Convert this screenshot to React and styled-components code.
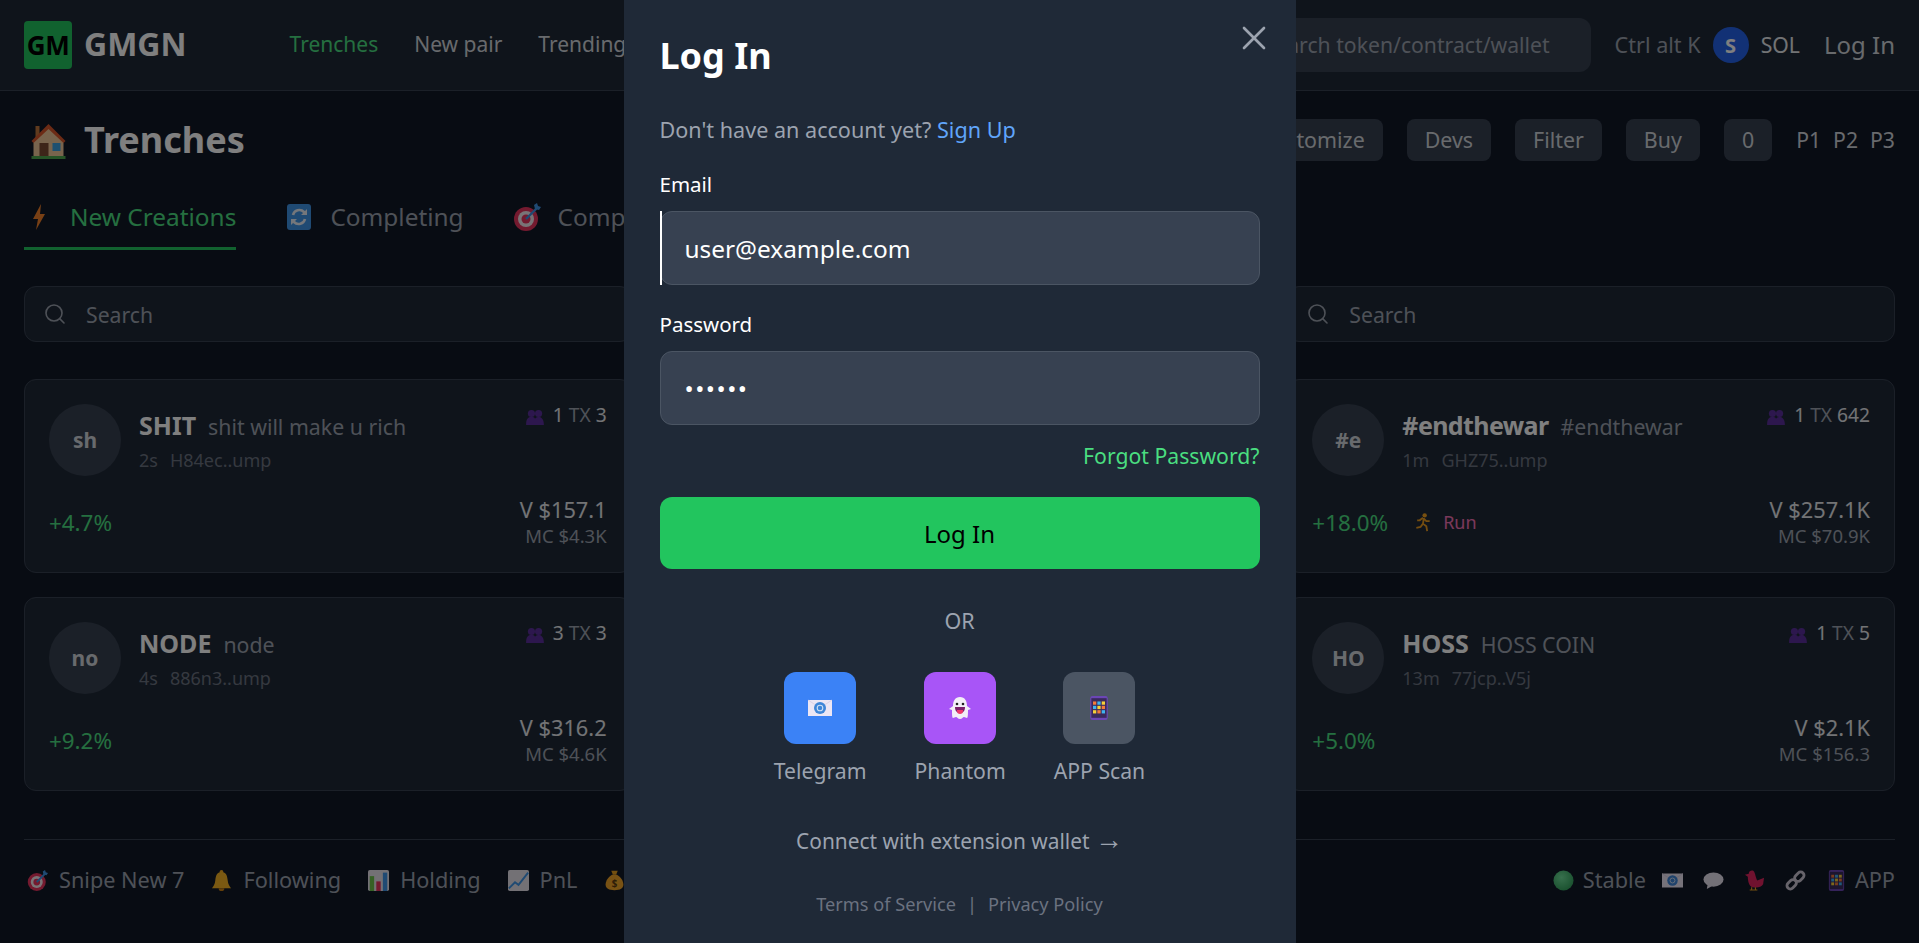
import React from 'react';
import styled, {createGlobalStyle} from 'styled-components';
import {X, Search as SearchIcon} from 'lucide-react';

const Global = createGlobalStyle`
  html, body { margin:0; padding:0; height:100%; background:#111827; }
  body { font-family:"Noto Sans","Open Sans",sans-serif; color:#e5e7eb; overflow:hidden; }
  * { box-sizing:border-box; }
`

/* ---------- emoji drawings ---------- */
const House = () => (
  <svg viewBox="0 0 36 36" width="100%" height="100%">
    <rect x="5" y="3" width="4" height="12" fill="#c0763c"/>
    <path d="M18 3 33 18v16H3V18z" fill="#f0c99a"/>
    <path d="M18 1 35 18l-2 2L18 6 3 20l-2-2z" fill="#d9562b"/>
    <rect x="9" y="20" width="9" height="13" fill="#7a4a33"/>
    <rect x="22" y="20" width="8" height="8" fill="#3aa0e0"/>
    <rect x="1" y="33" width="34" height="3" fill="#4fa84f"/>
  </svg>
)
const Bolt = () => (
  <svg viewBox="0 0 30 30" width="100%" height="100%">
    <path d="M17 2 9 17h5l-2 11 9-16h-5z" fill="#f0812a"/>
  </svg>
)
const Refresh = () => (
  <svg viewBox="0 0 30 30" width="100%" height="100%">
    <rect x="3" y="2" width="24" height="26" rx="3" fill="#3f95e6"/>
    <path d="M9 13a6.500 6.500 0 0 1 11-3l2 2M21 17a6.500 6.500 0 0 1-11 3l-2-2" fill="none" stroke="#e8eef7" strokeWidth="2.600"/>
    <path d="M23 7v6h-6zM7 23v-6h6z" fill="#e8eef7"/>
  </svg>
)
const Target = ({tight}) => (
  <svg viewBox={tight ? '1 1 28 28' : '0 0 30 30'} width="100%" height="100%">
    <circle cx="14" cy="17" r="12" fill="#e8345f"/>
    <circle cx="14" cy="17" r="8" fill="#f3e9ee"/>
    <circle cx="14" cy="17" r="4.500" fill="#e8345f"/>
    <path d="M14 17 25 6" stroke="#3f95e6" strokeWidth="2.400"/>
    <path d="M22 3l1 4 4 1 2-3-3-1-1-3z" fill="#3f95e6"/>
  </svg>
)
const People = () => (
  <svg viewBox="0 0 20 18" width="100%" height="100%">
    <circle cx="6" cy="5" r="4" fill="#5b2f9c"/>
    <circle cx="14" cy="5" r="4" fill="#5b2f9c"/>
    <path d="M0 18c0-7 2-9 6-9s4 2 4 2 1-2 4-2 6 2 6 9z" fill="#5b2f9c"/>
  </svg>
)
const Runner = () => (
  <svg viewBox="0 0 24 24" width="100%" height="100%">
    <circle cx="14" cy="4" r="2.600" fill="#f0a020"/>
    <path d="M12 7l-4 3-3 0M13 7l-1 7 4 3 1 6M12 14l-3 4-5 1M13 8l3 3 4 0" fill="none" stroke="#e89a20" strokeWidth="2.200"/>
  </svg>
)
const Bell = () => (
  <svg viewBox="2 0 20 22" width="100%" height="100%">
    <circle cx="12" cy="2" r="2" fill="#f0a820"/>
    <path d="M12 2c5 0 6 4 6.500 9 .3 4 2 6 3.500 8H2c1.500-2 3.200-4 3.500-8C6 6 7 2 12 2z" fill="#f5b324"/>
    <path d="M9 19h6a3 3 0 0 1-6 0z" fill="#c77f14"/>
  </svg>
)
const Bars = () => (
  <svg viewBox="0 0 24 24" width="100%" height="100%">
    <rect width="24" height="24" rx="2" fill="#e6e3ea"/>
    <rect x="2" y="7" width="5" height="17" fill="#6cc24a"/>
    <rect x="9.500" y="13" width="5" height="11" fill="#e8345f"/>
    <rect x="17" y="3" width="5" height="21" fill="#3f95e6"/>
  </svg>
)
const ChartUp = () => (
  <svg viewBox="0 0 24 24" width="100%" height="100%">
    <rect width="24" height="24" rx="2" fill="#e6e3ea"/>
    <path d="M1 21l7-7 4 3L23 3" fill="none" stroke="#3f95e6" strokeWidth="2.200"/>
  </svg>
)
const Money = () => (
  <svg viewBox="0 0 24 26" width="100%" height="100%">
    <path d="M8 1h8l-2 5h-4z" fill="#e8a020"/>
    <path d="M9 6h6c5 3 8 8 8 12 0 5-4 7-11 7S1 23 1 18c0-4 3-9 8-12z" fill="#f0a528"/>
    <text x="12" y="21" fontSize="12" fontWeight="700" textAnchor="middle" fill="#5a3a10">$</text>
  </svg>
)
const Ball = () => (
  <svg viewBox="0 0 22 22" width="100%" height="100%">
    <defs>
      <radialGradient id="ballFill" cx=".4" cy=".35" r=".75">
        <stop offset="0" stopColor="#6fe09a"/>
        <stop offset="1" stopColor="#2f9c58"/>
      </radialGradient>
    </defs>
    <circle cx="11" cy="11" r="10.500" fill="url(#ballFill)"/>
  </svg>
)
const Mail = () => (
  <svg viewBox="0 0 24 18" width="100%" height="100%">
    <rect y="1" width="24" height="16" fill="#ece6f4"/>
    <path d="M0 1l12 8 12-8" fill="none" stroke="#d5cbe2" strokeWidth=".8"/>
    <circle cx="12" cy="9" r="6" fill="#3f86d8"/>
    <circle cx="12" cy="9" r="2.800" fill="none" stroke="#cfe0f5" strokeWidth="1.100"/>
  </svg>
)
const Speech = () => (
  <svg viewBox="0 0 22 18" width="100%" height="100%">
    <ellipse cx="11" cy="8" rx="10.500" ry="7.500" fill="#e7e2ee"/>
    <path d="M5 12l-1 6 7-4z" fill="#e7e2ee"/>
  </svg>
)
const Bird = () => (
  <svg viewBox="0 0 22 22" width="100%" height="100%">
    <path d="M1 5l4-1C5 1 8 0 10 1c2 2 2 7 4 10l7-3-1 7c-2 3-6 4-11 3C5 17 4 11 4 7z" fill="#e0245e"/>
    <path d="M8 18v3M12 18v3M6 21h8" stroke="#e8a020" strokeWidth="1.200"/>
  </svg>
)
const ChainLink = () => (
  <svg viewBox="0 0 22 22" width="100%" height="100%" fill="none" stroke="#cfc9d6" strokeWidth="3">
    <rect x="-5.500" y="-3.500" width="11" height="7" rx="3.500" transform="translate(7 15) rotate(-45)"/>
    <rect x="-5.500" y="-3.500" width="11" height="7" rx="3.500" transform="translate(15 7) rotate(-45)"/>
  </svg>
)
const Phone = () => (
  <svg viewBox="0 0 16 22" width="100%" height="100%">
    <rect width="16" height="22" rx="2" fill="#6b46b5"/>
    <rect x="1" y="2" width="14" height="18" fill="#3a2a5c"/>
    {[3,7,11].flatMap(y => [2.500,6.500,10.500].map((x,i) => (
      <rect key={x+'-'+y} x={x} y={y+2} width="3" height="3" fill={['#f47b3a','#3fb4ef','#f7d038'][(i+y)%3]}/>
    )))}
  </svg>
)
const Ghost = () => (
  <svg viewBox="0 0 24 24" width="100%" height="100%">
    <path d="M12 1c5 0 7 4 7 9l4 3-3 1c0 3 0 8-1 8s-2-1-3-1-2 2-4 2-3-2-4-2-2 1-3 1-1-5-1-8l-3-1 4-3c0-5 2-9 7-9z" fill="#f2eef7"/>
    <circle cx="9" cy="8" r="1.300" fill="#222"/>
    <circle cx="15" cy="8" r="1.300" fill="#222"/>
    <path d="M7 11h10c0 4-2 6-5 6s-5-2-5-6z" fill="#7a1f6b"/>
    <path d="M9 14h6c0 3-1 4-3 4s-3-1-3-4z" fill="#f0386b"/>
  </svg>
)

/* ---------- page ---------- */
const Page = styled.div`
  height:943px;
  overflow:hidden;
  display:flex;
  flex-direction:column;
`
const Header = styled.header`
  height:91px;
  flex:none;
  background:#1f2937;
  border-bottom:1px solid #374151;
  padding:0 24px;
  display:flex;
  align-items:center;
  justify-content:space-between;
`
const Row = styled.div`
  display:flex;
  align-items:center;
  gap:${p => p.$gap || 0}px;
`
const LogoBox = styled.div`
  width:48px;
  height:48px;
  border-radius:4px;
  background:#22c55e;
  color:#000;
  font-weight:700;
  font-size:26px;
  letter-spacing:-.5px;
  display:flex;
  align-items:center;
  justify-content:center;
`
const LogoText = styled.div`
  font-size:32px;
  font-weight:700;
  color:#fff;
  margin-left:12px;
  margin-right:103px;
  padding-bottom:3px;
`
const NavLink = styled.a`
  font-size:21px;
  padding-bottom:2px;
  color:${p => p.$active ? '#4ade80' : '#d1d5db'};
`
const TopSearch = styled.div`
  width:347px;
  height:54px;
  border-radius:12px;
  background:#374151;
  color:#9ca3af;
  font-size:21.2px;
  display:flex;
  align-items:center;
  padding:0 0 2px 20px;
  white-space:nowrap;
  overflow:hidden;
`
const Shortcut = styled.span`
  margin-left:12px;
  padding-bottom:2px;
  font-size:21.6px;
  color:#9ca3af;
`
const SolBadge = styled.div`
  width:36px;
  height:36px;
  border-radius:50%;
  background:#2563eb;
  color:#fff;
  font-weight:700;
  font-size:20px;
  display:flex;
  align-items:center;
  justify-content:center;
`
const Sol = styled.span`
  font-size:21.2px;
  padding-bottom:2px;
  color:#e5e7eb;
`
const HeaderLogin = styled.span`
  margin-left:12px;
  padding-bottom:2px;
  font-size:24px;
  color:#d1d5db;
`
const Main = styled.main`
  flex:1;
  padding:0 24px;
  display:flex;
  flex-direction:column;
`
const TitleRow = styled.div`
  height:48px;
  margin-top:25px;
  display:flex;
  align-items:center;
  justify-content:space-between;
`
const Title = styled.h1`
  margin:0;
  display:flex;
  align-items:center;
  gap:17px;
  font-size:36px;
  line-height:48px;
  font-weight:700;
  color:#fff;
`
const TitleEmoji = styled.span`
  width:37px;
  height:36px;
  margin-left:6px;
`
const ToolButton = styled.button`
  height:42px;
  padding:0 18px 2px;
  border:none;
  border-radius:8px;
  background:#374151;
  color:#d1d5db;
  font:inherit;
  font-size:21.4px;
`
const Preset = styled.span`
  font-size:21.2px;
  padding-bottom:2px;
  color:#d1d5db;
`
const Tabs = styled.div`
  display:flex;
  gap:48px;
  margin-top:37px;
`
const Tab = styled.div`
  display:flex;
  align-items:center;
  gap:16px;
  height:49px;
  padding-bottom:15px;
  font-size:24.4px;
  color:${p => p.$active ? '#4ade80' : '#9ca3af'};
  border-bottom:3px solid ${p => p.$active ? '#22c55e' : 'transparent'};
`
const TabEmoji = styled.span`
  width:30px;
  height:30px;
  flex:none;
`
const Columns = styled.div`
  display:grid;
  grid-template-columns:repeat(3,1fr);
  gap:24px;
  margin-top:36px;
`
const Column = styled.section`
  display:flex;
  flex-direction:column;
  gap:24px;
`
const SearchBox = styled.div`
  height:56px;
  margin-bottom:13px;
  border:1px solid #374151;
  border-radius:12px;
  background:#1f2937;
  padding:0 18px;
  display:flex;
  align-items:center;
  gap:19px;
  font-size:21.2px;
  color:#9ca3af;
`
const Card = styled.article`
  height:194px;
  padding:24px;
  border:1px solid #374151;
  border-radius:12px;
  background:#1f2937;
  display:flex;
  flex-direction:column;
  justify-content:space-between;
`
const CardTop = styled.div`
  display:flex;
  align-items:flex-start;
  justify-content:space-between;
`
const CardId = styled.div`
  display:flex;
  align-items:center;
  gap:18px;
`
const Avatar = styled.div`
  width:72px;
  height:72px;
  border-radius:50%;
  background:#374151;
  color:#d1d5db;
  font-size:21px;
  font-weight:700;
  display:flex;
  align-items:center;
  justify-content:center;
`
const NameRow = styled.div`
  display:flex;
  align-items:baseline;
  gap:12px;
  line-height:32px;
`
const Name = styled.span`
  font-size:25px;
  font-weight:700;
  letter-spacing:${p => p.$tight ? '-.6px' : 'normal'};
  color:#fff;
`
const Sub = styled.span`
  font-size:21.3px;
  color:#9ca3af;
`
const Meta = styled.div`
  margin-top:5px;
  display:flex;
  gap:12px;
  font-size:18px;
  line-height:24px;
  color:#6b7280;
`
const Tx = styled.div`
  display:flex;
  align-items:center;
  gap:9px;
  font-size:19.2px;
  line-height:22px;
  color:#9ca3af;
`
const TxNum = styled.span`
  color:#e5e7eb;
`
const TxIcon = styled.span`
  width:18px;
  height:16px;
`
const CardBottom = styled.div`
  display:flex;
  align-items:center;
  justify-content:space-between;
`
const BottomLeft = styled.div`
  display:flex;
  align-items:center;
  gap:25px;
`
const Pct = styled.span`
  font-size:22.4px;
  color:#4ade80;
`
const RunTag = styled.span`
  display:flex;
  align-items:center;
  gap:10px;
  font-size:18px;
  color:#f472b6;
`
const RunIcon = styled.span`
  width:20px;
  height:22px;
`
const Amounts = styled.div`
  text-align:right;
`
const Volume = styled.div`
  font-size:21.8px;
  line-height:28px;
  color:#e5e7eb;
`
const Cap = styled.div`
  font-size:18.5px;
  line-height:24px;
  color:#9ca3af;
`
const Footer = styled.footer`
  margin-top:48px;
  border-top:1px solid #374151;
  padding-top:26px;
  display:flex;
  align-items:center;
  justify-content:space-between;
  font-size:21.7px;
  color:#9ca3af;
`
const FooterItem = styled.span`
  display:flex;
  align-items:center;
  gap:8px;
  line-height:28px;
`
const FooterEmoji = styled.span`
  width:21px;
  height:21px;
  margin:0 ${p => p.$m === undefined ? 3 : p.$m}px;
  display:flex;
  align-items:center;
`

/* ---------- modal ---------- */
const Overlay = styled.div`
  position:fixed;
  inset:0;
  background:rgba(0,0,0,.5);
  display:flex;
  justify-content:center;
  overflow:hidden;
`
const Modal = styled.div`
  position:relative;
  width:672px;
  height:943px;
  background:#1f2937;
  padding:36px;
  color:#fff;
`
const Close = styled.button`
  position:absolute;
  top:18px;
  right:22px;
  width:40px;
  height:40px;
  padding:0;
  border:none;
  background:none;
  color:#9ca3af;
`
const ModalTitle = styled.h2`
  margin:0;
  font-size:36px;
  line-height:40px;
  font-weight:700;
`
const Prompt = styled.p`
  margin:40px 0 0;
  font-size:21.6px;
  line-height:28px;
  color:#9ca3af;
`
const SignUp = styled.a`
  color:#60a5fa;
`
const Label = styled.label`
  display:block;
  margin-top:${p => p.$top}px;
  margin-bottom:13px;
  font-size:20.5px;
  line-height:28px;
  color:#fff;
`
const FieldWrap = styled.div`
  position:relative;
  ${p => p.$focused && `
    &::before {
      content:"";
      position:absolute;
      left:0;
      top:0;
      bottom:0;
      width:2px;
      background:#fff;
    }
  `}
`
const Field = styled.input`
  display:block;
  width:100%;
  height:74px;
  padding:0 24px;
  border:1px solid #4b5563;
  border-radius:12px;
  background:#374151;
  color:#fff;
  font:inherit;
  font-size:24.4px;
  letter-spacing:${p => p.type === 'password' ? '1.500px' : 'normal'};
  outline:none;
`
const Forgot = styled.a`
  display:block;
  margin-top:17px;
  text-align:right;
  font-size:21.2px;
  line-height:28px;
  color:#4ade80;
`
const Submit = styled.button`
  display:block;
  width:100%;
  height:72px;
  margin-top:27px;
  border:none;
  border-radius:12px;
  background:#22c55e;
  color:#000;
  font:inherit;
  font-size:24px;
`
const Or = styled.div`
  margin-top:38px;
  text-align:center;
  font-size:21.5px;
  line-height:28px;
  color:#9ca3af;
`
const Options = styled.div`
  margin-top:37px;
  display:flex;
  justify-content:center;
  gap:48px;
`
const Option = styled.div`
  display:flex;
  flex-direction:column;
  align-items:center;
  gap:13px;
  font-size:21.2px;
  line-height:28px;
  color:#9ca3af;
`
const OptionTile = styled.div`
  width:72px;
  height:72px;
  border-radius:12px;
  background:${p => p.$bg};
  display:flex;
  align-items:center;
  justify-content:center;
`
const OptionIcon = styled.span`
  width:24px;
  height:24px;
  display:flex;
  align-items:center;
  justify-content:center;
`
const Connect = styled.div`
  margin-top:42px;
  text-align:center;
  font-size:20.9px;
  line-height:28px;
  color:#9ca3af;
`
const Arrow = styled.span`
  font-family:"Liberation Sans",sans-serif;
  font-size:28px;
  line-height:0;
`
const Legal = styled.div`
  margin-top:35px;
  text-align:center;
  font-size:18.2px;
  line-height:28px;
  color:#6b7280;
`
const Bar = styled.span`
  margin:0 11px;
`

const columns = [
  [
    {av:'sh', name:'SHIT', sub:'shit will make u rich', age:'2s', addr:'H84ec..ump', h:'1', tx:'3', pct:'+4.7%', v:'$157.1', mc:'$4.3K'},
    {av:'no', name:'NODE', sub:'node', age:'4s', addr:'886n3..ump', h:'3', tx:'3', pct:'+9.2%', v:'$316.2', mc:'$4.6K'},
  ],
  [],
  [
    {av:'#e', name:'#endthewar', tight:true, sub:'#endthewar', age:'1m', addr:'GHZ75..ump', h:'1', tx:'642', pct:'+18.0%', run:true, v:'$257.1K', mc:'$70.9K'},
    {av:'HO', name:'HOSS', sub:'HOSS COIN', age:'13m', addr:'77jcp..V5j', h:'1', tx:'5', pct:'+5.0%', v:'$2.1K', mc:'$156.3'},
  ],
];

function TokenCard({t}) {
  return (
    <Card>
      <CardTop>
        <CardId>
          <Avatar>{t.av}</Avatar>
          <div>
            <NameRow><Name $tight={t.tight}>{t.name}</Name><Sub>{t.sub}</Sub></NameRow>
            <Meta><span>{t.age}</span><span>{t.addr}</span></Meta>
          </div>
        </CardId>
        <Tx><TxIcon><People/></TxIcon><span><TxNum>{t.h}</TxNum> TX <TxNum>{t.tx}</TxNum></span></Tx>
      </CardTop>
      <CardBottom>
        <BottomLeft>
          <Pct>{t.pct}</Pct>
          {t.run && <RunTag><RunIcon><Runner/></RunIcon>Run</RunTag>}
        </BottomLeft>
        <Amounts>
          <Volume>V {t.v}</Volume>
          <Cap>MC {t.mc}</Cap>
        </Amounts>
      </CardBottom>
    </Card>
  )
}

export default function App() {
  return (
    <>
      <Global/>
      <Page>
        <Header>
          <Row>
            <LogoBox>GM</LogoBox>
            <LogoText>GMGN</LogoText>
            <Row $gap={36}>
              <NavLink $active>Trenches</NavLink>
              <NavLink>New pair</NavLink>
              <NavLink>Trending</NavLink>
            </Row>
          </Row>
          <Row $gap={12}>
            <TopSearch>Search token/contract/wallet</TopSearch>
            <Shortcut>Ctrl alt K</Shortcut>
            <SolBadge>S</SolBadge>
            <Sol>SOL</Sol>
            <HeaderLogin>Log In</HeaderLogin>
          </Row>
        </Header>
        <Main>
          <TitleRow>
            <Title><TitleEmoji><House/></TitleEmoji>Trenches</Title>
            <Row $gap={24}>
              <ToolButton>Customize</ToolButton>
              <ToolButton>Devs</ToolButton>
              <ToolButton>Filter</ToolButton>
              <ToolButton>Buy</ToolButton>
              <ToolButton>0</ToolButton>
              <Row $gap={12}><Preset>P1</Preset><Preset>P2</Preset><Preset>P3</Preset></Row>
            </Row>
          </TitleRow>
          <Tabs>
            <Tab $active><TabEmoji><Bolt/></TabEmoji>New Creations</Tab>
            <Tab><TabEmoji><Refresh/></TabEmoji>Completing</Tab>
            <Tab><TabEmoji><Target/></TabEmoji>Completed</Tab>
          </Tabs>
          <Columns>
            {columns.map((list, i) => (
              <Column key={i}>
                {list.length > 0 && <SearchBox><SearchIcon size={24} strokeWidth={1.6}/>Search</SearchBox>}
                {list.map(t => <TokenCard key={t.name} t={t}/>)}
              </Column>
            ))}
          </Columns>
          <Footer>
            <Row $gap={24}>
              <FooterItem><FooterEmoji><Target tight/></FooterEmoji>Snipe New 7</FooterItem>
              <FooterItem><FooterEmoji><Bell/></FooterEmoji>Following</FooterItem>
              <FooterItem><FooterEmoji><Bars/></FooterEmoji>Holding</FooterItem>
              <FooterItem><FooterEmoji><ChartUp/></FooterEmoji>PnL</FooterItem>
              <FooterItem><FooterEmoji><Money/></FooterEmoji></FooterItem>
            </Row>
            <Row $gap={16}>
              <FooterItem><FooterEmoji $m={1}><Ball/></FooterEmoji>Stable</FooterItem>
              <Row $gap={20}>
                <FooterEmoji $m={0}><Mail/></FooterEmoji>
                <FooterEmoji $m={0}><Speech/></FooterEmoji>
                <FooterEmoji $m={0}><Bird/></FooterEmoji>
                <FooterEmoji $m={0}><ChainLink/></FooterEmoji>
                <FooterItem><FooterEmoji $m={0}><Phone/></FooterEmoji>APP</FooterItem>
              </Row>
            </Row>
          </Footer>
        </Main>
      </Page>
      <Overlay>
        <Modal>
          <Close><X size={40} strokeWidth={1.6}/></Close>
          <ModalTitle>Log In</ModalTitle>
          <Prompt>Don't have an account yet? <SignUp>Sign Up</SignUp></Prompt>
          <Label $top={26}>Email</Label>
          <FieldWrap $focused><Field defaultValue="user@example.com"/></FieldWrap>
          <Label $top={25}>Password</Label>
          <FieldWrap><Field type="password" defaultValue="secret"/></FieldWrap>
          <Forgot>Forgot Password?</Forgot>
          <Submit>Log In</Submit>
          <Or>OR</Or>
          <Options>
            <Option><OptionTile $bg="#3b82f6"><OptionIcon><Mail/></OptionIcon></OptionTile>Telegram</Option>
            <Option><OptionTile $bg="#a855f7"><OptionIcon><Ghost/></OptionIcon></OptionTile>Phantom</Option>
            <Option><OptionTile $bg="#4b5563"><OptionIcon><Phone/></OptionIcon></OptionTile>APP Scan</Option>
          </Options>
          <Connect>Connect with extension wallet <Arrow>→</Arrow></Connect>
          <Legal>Terms of Service<Bar>|</Bar>Privacy Policy</Legal>
        </Modal>
      </Overlay>
    </>
  )
}
